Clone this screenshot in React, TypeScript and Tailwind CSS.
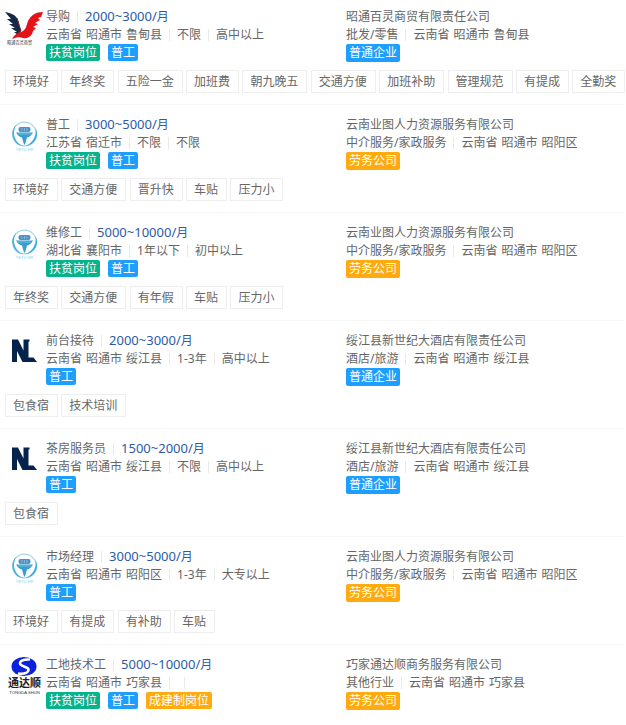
import React from "react";

type LogoKind = "bird" | "yetu" | "nl" | "tongda";
type Tone = "green" | "blue" | "orange";

interface Job {
  logo: LogoKind;
  title: string;
  salary: string;
  place: string[];
  requirements: string[];
  tags: [string, Tone][];
  company: string;
  industry: string;
  companyPlace: string[];
  companyTag: [string, Tone];
  perks: string[];
}

const toneClass: Record<Tone, string> = {
  green: "bg-[#08b28b]",
  blue: "bg-[#1e9fff]",
  orange: "bg-[#ffab0f]",
};

const yetu = {
  company: "云南业图人力资源服务有限公司",
  industry: "中介服务/家政服务",
  companyPlace: ["云南省", "昭通市", "昭阳区"],
  companyTag: ["劳务公司", "orange"] as [string, Tone],
};

const hotel = {
  company: "绥江县新世纪大酒店有限责任公司",
  industry: "酒店/旅游",
  companyPlace: ["云南省", "昭通市", "绥江县"],
  companyTag: ["普通企业", "blue"] as [string, Tone],
};

const jobs: Job[] = [
  {
    logo: "bird",
    title: "导购",
    salary: "2000~3000/",
    place: ["云南省", "昭通市", "鲁甸县"],
    requirements: ["不限", "高中以上"],
    tags: [["扶贫岗位", "green"], ["普工", "blue"]],
    company: "昭通百灵商贸有限责任公司",
    industry: "批发/零售",
    companyPlace: ["云南省", "昭通市", "鲁甸县"],
    companyTag: ["普通企业", "blue"],
    perks: ["环境好", "年终奖", "五险一金", "加班费", "朝九晚五", "交通方便", "加班补助", "管理规范", "有提成", "全勤奖"],
  },
  {
    logo: "yetu",
    title: "普工",
    salary: "3000~5000/",
    place: ["江苏省", "宿迁市"],
    requirements: ["不限", "不限"],
    tags: [["扶贫岗位", "green"], ["普工", "blue"]],
    ...yetu,
    perks: ["环境好", "交通方便", "晋升快", "车贴", "压力小"],
  },
  {
    logo: "yetu",
    title: "维修工",
    salary: "5000~10000/",
    place: ["湖北省", "襄阳市"],
    requirements: ["1年以下", "初中以上"],
    tags: [["扶贫岗位", "green"], ["普工", "blue"]],
    ...yetu,
    perks: ["年终奖", "交通方便", "有年假", "车贴", "压力小"],
  },
  {
    logo: "nl",
    title: "前台接待",
    salary: "2000~3000/",
    place: ["云南省", "昭通市", "绥江县"],
    requirements: ["1-3年", "高中以上"],
    tags: [["普工", "blue"]],
    ...hotel,
    perks: ["包食宿", "技术培训"],
  },
  {
    logo: "nl",
    title: "茶房服务员",
    salary: "1500~2000/",
    place: ["云南省", "昭通市", "绥江县"],
    requirements: ["不限", "高中以上"],
    tags: [["普工", "blue"]],
    ...hotel,
    perks: ["包食宿"],
  },
  {
    logo: "yetu",
    title: "市场经理",
    salary: "3000~5000/",
    place: ["云南省", "昭通市", "昭阳区"],
    requirements: ["1-3年", "大专以上"],
    tags: [["普工", "blue"]],
    ...yetu,
    perks: ["环境好", "有提成", "有补助", "车贴"],
  },
  {
    logo: "tongda",
    title: "工地技术工",
    salary: "5000~10000/",
    place: ["云南省", "昭通市", "巧家县"],
    requirements: ["", ""],
    tags: [["扶贫岗位", "green"], ["普工", "blue"], ["成建制岗位", "orange"]],
    company: "巧家通达顺商务服务有限公司",
    industry: "其他行业",
    companyPlace: ["云南省", "昭通市", "巧家县"],
    companyTag: ["劳务公司", "orange"],
    perks: [],
  },
];

function Logo({ kind }: { kind: LogoKind }) {
  return (
    <svg viewBox="0 0 40 40" className="block size-10 font-['Liberation_Sans','Noto_Sans_CJK_SC',sans-serif]" aria-hidden="true">
      {kind === "bird" && (
        <>
          <path d="M1 4 C7 5 12 7 14 12 L17 23 L14 27 L10 24 L13 24 L7 20 L11 20 L5 16 L9 16 L3 11 L7 11 Z" fill="#142a48" />
          <path d="M39 4 L37 9 L34 10 L36 12 L31 15 L34 16 L29 19 L32 20 L29 23 C28 28 24 31 19 30 C15 29 13 29 8 31 C10 27 13 25 17 24 C22 22 22 19 24 13 C27 7 32 4 39 4 Z" fill="#e31319" />
          <path d="M13 10 L17 23 L14 25" stroke="#8b2430" strokeWidth="1" fill="none" />
          <text x="3" y="36" fontSize="4.2" fill="#333333">昭通百灵商贸</text>
        </>
      )}
      {kind === "yetu" && (
        <g transform="translate(0.5 1)">
          <circle cx="20" cy="17" r="11.8" fill="none" stroke="#a3d6ec" strokeWidth="1.2" />
          <path d="M12 7.5 A12.5 12.5 0 0 0 19 29.3 A14.5 14.5 0 0 1 12 7.5Z" fill="#4db2de" />
          <path d="M31 11 A12 12 0 0 1 21 29 A16 16 0 0 0 31 11Z" fill="#3faedb" />
          <path d="M11.5 15.5 H28.5 Q26 20 22.5 20.5 L21 26 L20 28 L19 26 L17.5 20.5 Q14 20 11.5 15.5Z" fill="#379fcf" />
          <rect x="14" y="10" width="12" height="5" rx="2" fill="#4f8fc4" />
          <path d="M17.5 11 V14 M20 11 V14 M22.5 11 V14" stroke="#8fbfe0" strokeWidth="0.8" />
          <path d="M13 17 H27" stroke="#7cc4e4" strokeWidth="0.8" />
          <text x="20" y="34" fontSize="4" textAnchor="middle" fill="#8fcfe2">YETU HR</text>
        </g>
      )}
      {kind === "nl" && (
        <path d="M8 30 V7.5 H14 L19.5 18.5 V7.5 H25.5 V9.5 H24.5 V25.5 H29.5 L33 30 H18.5 L13 19 V30 Z" fill="#06234b" />
      )}
      {kind === "tongda" && (
        <>
          <ellipse cx="20" cy="10.5" rx="12.5" ry="9.5" fill="#0b22dc" />
          <path d="M26 3.5 C19 3 14.5 5.5 16.5 8.5 C18.5 11 25 11 24.5 14 C24 17 19 18 14 17.5" fill="none" stroke="white" strokeWidth="2.6" />
          <text x="20.5" y="30.5" fontSize="11" fontWeight="700" textAnchor="middle" fill="#222222">通达顺</text>
          <text x="20.5" y="37.5" fontSize="4.2" textAnchor="middle" fill="#333333">TONGDA SHUN</text>
        </>
      )}
    </svg>
  );
}

function Divider() {
  return <span className="mx-[7px] h-3 w-px bg-[#e6ebe6]" />;
}

function Place({ parts }: { parts: string[] }) {
  return (
    <span className="flex gap-1">
      {parts.map((part) => (
        <span key={part}>{part}</span>
      ))}
    </span>
  );
}

function Perk({ label }: { label: string }) {
  return (
    <li className="inline-block h-[23px] border border-[#eeeeee] pr-2 pl-[7px] align-top leading-[23px]">
      {label}
    </li>
  );
}

function JobRow({ job }: { job: Job }) {
  return (
    <article className="border-b border-[#f6f6f6] py-[11px] first:pt-2 last:border-b-0">
      <div className="flex">
        <div className="w-[46px] shrink-0 pl-1">
          <Logo kind={job.logo} />
        </div>
        <div className="grid flex-1 grid-cols-[300fr_278fr] whitespace-nowrap">
          <div>
            <h2 className="flex h-[18px] items-center">
              <a href="#job">{job.title}</a>
              <Divider />
              <span className="text-[#2d5aa7]">
                <span className="text-[13px] leading-none">{job.salary}</span>月
              </span>
            </h2>
            <p className="flex h-[18px] items-center">
              <Place parts={job.place} />
              {job.requirements.map((item, i) => (
                <React.Fragment key={i}>
                  <Divider />
                  <span>{item}</span>
                </React.Fragment>
              ))}
            </p>
            <div className="flex h-[18px] items-start gap-2">
              {job.tags.map(([label, tone]) => (
                <span key={label} className={`h-[17px] rounded-xs px-[3px] leading-[18px] text-white ${toneClass[tone]}`}>
                  {label}
                </span>
              ))}
            </div>
          </div>
          <div>
            <h3 className="h-[18px]">
              <a href="#company">{job.company}</a>
            </h3>
            <p className="flex h-[18px] items-center">
              <span>{job.industry}</span>
              <Divider />
              <Place parts={job.companyPlace} />
            </p>
            <div className="flex h-[18px] items-center">
              <span className={`h-[18px] rounded-xs px-[3px] text-white ${toneClass[job.companyTag[1]]}`}>
                {job.companyTag[0]}
              </span>
            </div>
          </div>
        </div>
      </div>
      {job.perks.length > 0 && (
        <ul className="mt-2 h-[23px] pl-[5px] whitespace-nowrap font-['Liberation_Sans','Noto_Sans_CJK_SC',sans-serif]">
          {job.perks.map((perk) => (
            <React.Fragment key={perk}>
              <Perk label={perk} />{" "}
            </React.Fragment>
          ))}
        </ul>
      )}
    </article>
  );
}

export default function App() {
  return (
    <main className="overflow-hidden bg-white pr-0.5 font-['Noto_Sans','Noto_Sans_CJK_SC',sans-serif] text-xs leading-[18px] text-[#666666]">
      {jobs.map((job) => (
        <JobRow key={job.title} job={job} />
      ))}
    </main>
  );
}
